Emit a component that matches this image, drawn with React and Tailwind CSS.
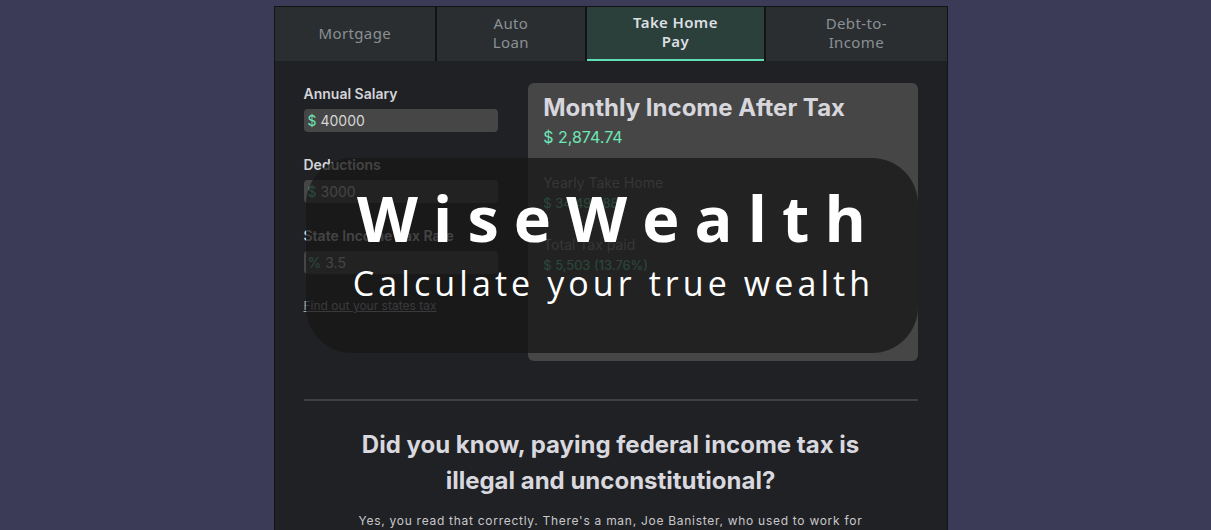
import React from 'react';

const tabs = [
  { label: 'Mortgage', w: 'w-[162px]', max: 'max-w-[110px]' },
  { label: 'Auto Loan', w: 'w-[149px]', max: 'max-w-[50px]' },
  { label: 'Take Home Pay', w: 'w-[179px]', max: 'max-w-[100px]', active: true },
  { label: 'Debt-to-Income', w: 'w-[182px]', max: 'max-w-[80px]' },
];

const Field = ({ label, prefix, value, className = '' }) => (
  <div className={className}>
    <div className="text-[14px] font-semibold text-[#d4d4d8] leading-5">{label}</div>
    <div className="mt-[5px] h-[23px] rounded-[4px] bg-[#464646] flex items-center px-[4px] text-[14px]">
      <span className="text-[#6ee7b7]">{prefix}</span>
      <span className="ml-[4px] text-[#d6d6d6]">{value}</span>
    </div>
  </div>
);

const App = () => {
  return (
    <div className="min-h-screen bg-[#3b3a57] flex justify-center pt-[6px] pl-[10px] font-['Inter',sans-serif]">
      <div className="w-[674px] bg-[#202124] border border-[#111315] h-[530px] overflow-hidden">
        {/* Tabs */}
        <div className="flex gap-[2px] bg-[#111315] font-['Noto_Sans',sans-serif]">
          {tabs.map((t) => (
            <div
              key={t.label}
              className={`${t.w} h-[54px] flex items-center justify-center text-center text-[15px] leading-[19px] tracking-wide pb-[2px] ${
                t.active
                  ? 'bg-[#2b3f3b] text-[#dcdfe2] font-semibold border-b-2 border-[#5fe0b4]'
                  : 'bg-[#2a2e31] text-[#8b9094]'
              }`}
            >
              <span className={t.max}>{t.label}</span>
            </div>
          ))}
        </div>

        {/* Calculator */}
        <div className="relative px-[29px] pt-[22px]">
          <div className="flex gap-[30px]">
            <div className="w-[195px] pt-[1px]">
              <Field label="Annual Salary" prefix="$" value="40000" />
              <Field label="Deductions" prefix="$" value="3000" className="mt-[23px]" />
              <Field label="State Income Tax Rate" prefix="%" value="3.5" className="mt-[23px]" />
              <div className="mt-[23px] text-[12px] text-[#a8a8ad] underline">Find out your states tax</div>
            </div>

            <div className="w-[390px] h-[278px] bg-[#464646] rounded-[6px] px-[15px] pt-[11px]">
              <div className="text-[24px] font-bold text-[#d6d6dc] leading-7">Monthly Income After Tax</div>
              <div className="text-[16px] text-[#6ee7b7] leading-6 mt-[3px]">$ 2,874.74</div>
              <div className="mt-[24px] text-[14px] text-[#9a9a9a] leading-5">Yearly Take Home</div>
              <div className="text-[13px] text-[#6ee7b7] leading-5">$ 34,496.88</div>
              <div className="mt-[22px] text-[14px] text-[#9a9a9a] leading-5">Total Tax paid</div>
              <div className="text-[13px] text-[#6ee7b7] leading-5">$ 5,503 (13.76%)</div>
            </div>
          </div>

          {/* Brand overlay */}
          <div className="absolute left-[31px] top-[97px] w-[612px] h-[195px] rounded-[46px] bg-[rgba(24,24,24,0.77)] flex flex-col items-center pt-[25px] text-white font-['Open_Sans',sans-serif]">
            <div className="text-[63px] font-bold leading-[70px] tracking-[0.24em] pl-[0.24em]">WiseWealth</div>
            <div className="text-[34px] leading-[40px] tracking-[0.12em] pl-[0.12em] mt-[10px]">Calculate your true wealth</div>
          </div>
        </div>

        {/* Info */}
        <div className="px-[29px]">
          <div className="mt-[38px] border-t-2 border-[#3e3f42]" />
          <h2 className="mt-[26px] text-center text-[24px] font-bold leading-[36px] text-[#d8d8de] px-[40px]">
            Did you know, paying federal income tax is illegal and unconstitutional?
          </h2>
          <p className="mt-[13px] text-center text-[12px] tracking-[0.06em] text-[#c8c8cc] px-[20px]">
            Yes, you read that correctly. There's a man, Joe Banister, who used to work for
          </p>
        </div>
      </div>
    </div>
  );
};

export default App;
